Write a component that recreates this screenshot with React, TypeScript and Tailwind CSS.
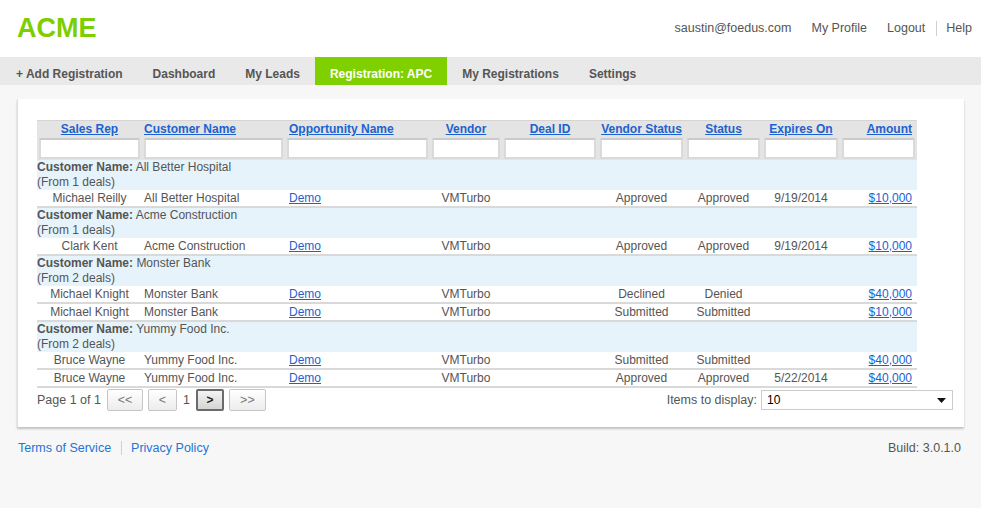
type Deal = {
  rep: string;
  customer: string;
  vendorStatus: string;
  status: string;
  expires: string;
  amount: string;
};

type Group = {
  customer: string;
  deals: Deal[];
};

const groups: Group[] = [
  {
    customer: "All Better Hospital",
    deals: [
      { rep: "Michael Reilly", customer: "All Better Hospital", vendorStatus: "Approved", status: "Approved", expires: "9/19/2014", amount: "$10,000" },
    ],
  },
  {
    customer: "Acme Construction",
    deals: [
      { rep: "Clark Kent", customer: "Acme Construction", vendorStatus: "Approved", status: "Approved", expires: "9/19/2014", amount: "$10,000" },
    ],
  },
  {
    customer: "Monster Bank",
    deals: [
      { rep: "Michael Knight", customer: "Monster Bank", vendorStatus: "Declined", status: "Denied", expires: "", amount: "$40,000" },
      { rep: "Michael Knight", customer: "Monster Bank", vendorStatus: "Submitted", status: "Submitted", expires: "", amount: "$10,000" },
    ],
  },
  {
    customer: "Yummy Food Inc.",
    deals: [
      { rep: "Bruce Wayne", customer: "Yummy Food Inc.", vendorStatus: "Submitted", status: "Submitted", expires: "", amount: "$40,000" },
      { rep: "Bruce Wayne", customer: "Yummy Food Inc.", vendorStatus: "Approved", status: "Approved", expires: "5/22/2014", amount: "$40,000" },
    ],
  },
];

const navItems = ["+ Add Registration", "Dashboard", "My Leads", "Registration: APC", "My Registrations", "Settings"];

const columns = [
  { label: "Sales Rep", width: "w-[105px]", align: "text-center" },
  { label: "Customer Name", width: "w-[143px]", align: "text-left pl-[2px]" },
  { label: "Opportunity Name", width: "w-[145px]", align: "text-left pl-[4px]" },
  { label: "Vendor", width: "w-[72px]", align: "text-center" },
  { label: "Deal ID", width: "w-[96px]", align: "text-center" },
  { label: "Vendor Status", width: "w-[87px]", align: "text-center" },
  { label: "Status", width: "w-[77px]", align: "text-center" },
  { label: "Expires On", width: "w-[78px]", align: "text-center" },
  { label: "Amount", width: "w-[77px]", align: "text-right pr-[5px]" },
];

function PageButton({ label, width, active }: { label: string; width: string; active?: boolean }) {
  return (
    <button
      className={
        active
          ? `h-[22px] ${width} rounded-[2px] border-2 border-[#6b6b6b] bg-gradient-to-b from-[#f4f4f4] to-[#d4d4d4] text-[12px] font-bold text-[#222]`
          : `h-[22px] ${width} rounded-[2px] border border-[#c6c6c6] bg-gradient-to-b from-white to-[#ececec] text-[12.5px] text-[#777]`
      }
    >
      {label}
    </button>
  );
}

export default function App() {
  return (
    <div className="min-h-[508px] bg-[#f7f7f7] font-['Liberation_Sans',Arial,sans-serif] text-[#555]">
      <header className="flex h-[57px] items-center justify-between bg-white pl-[17px] pr-[9px]">
        <div className="text-[27px] font-bold leading-none text-[#7dce00]">ACME</div>
        <div className="flex items-center text-[12.5px] text-[#555]">
          <span>saustin@foedus.com</span>
          <span className="ml-[20px]">My Profile</span>
          <span className="ml-[20px]">Logout</span>
          <span className="ml-[11px] mr-[9px] h-[15px] w-px bg-[#cfcfcf]" />
          <span>Help</span>
        </div>
      </header>

      <nav className="flex h-[28px] bg-[#e9e9e9] pl-px">
        {navItems.map((item) => (
          <div
            key={item}
            className={
              item === "Registration: APC"
                ? "flex items-center bg-[#80d000] px-[15px] pt-[6px] text-[12px] font-bold text-white"
                : "flex items-center px-[15px] pt-[6px] text-[12px] font-bold text-[#555]"
            }
          >
            {item}
          </div>
        ))}
      </nav>

      <main className="px-[17px] pt-[14px]">
        <div className="border-l border-[#e0e0e0] bg-white pb-[16px] pl-[19px] pr-[11px] pt-[21px] shadow-[0_2px_2px_rgba(0,0,0,0.22)]">
          <table className="w-[880px] table-fixed border-collapse text-[12px]">
            <colgroup>
              {columns.map((c) => (
                <col key={c.label} className={c.width} />
              ))}
            </colgroup>
            <thead className="bg-[#e4e4e4]">
              <tr className="border-t border-[#d4d4d4]">
                {columns.map((c) => (
                  <th key={c.label} className={`h-[16px] font-bold leading-[16px] ${c.align}`}>
                    <a className="text-[#1b62d0] underline">{c.label}</a>
                  </th>
                ))}
              </tr>
              <tr>
                {columns.map((c) => (
                  <td key={c.label} className="px-[2px] pb-px pt-px">
                    <div className="h-[21px] w-full border-2 border-[#dadada] border-t-[#cacaca] bg-white" />
                  </td>
                ))}
              </tr>
            </thead>
            <tbody>
              {groups.map((g) => (
                <>
                  <tr key={g.customer} className="bg-[#e6f3fb]">
                    <td colSpan={9} className="h-[30px] align-top leading-[15px]">
                      <div>
                        <span className="font-bold">Customer Name:</span> {g.customer}
                      </div>
                      <div>(From {g.deals.length} deals)</div>
                    </td>
                  </tr>
                  {g.deals.map((d, i) => (
                    <tr key={g.customer + i} className="border-b-2 border-[#d9d9d9]">
                      <td className="h-[16px] text-center leading-[16px]">{d.rep}</td>
                      <td className="pl-[2px] leading-[16px]">{d.customer}</td>
                      <td className="pl-[4px] leading-[16px]">
                        <a className="text-[#1b62d0] underline">Demo</a>
                      </td>
                      <td className="text-center leading-[16px]">VMTurbo</td>
                      <td />
                      <td className="text-center leading-[16px]">{d.vendorStatus}</td>
                      <td className="text-center leading-[16px]">{d.status}</td>
                      <td className="text-center leading-[16px]">{d.expires}</td>
                      <td className="pr-[5px] text-right leading-[16px]">
                        <a className="text-[#1b62d0] underline">{d.amount}</a>
                      </td>
                    </tr>
                  ))}
                </>
              ))}
            </tbody>
          </table>

          <div className="mt-px flex items-center justify-between">
            <div className="flex items-center gap-[5px] text-[12.5px]">
              <span className="mr-px">Page 1 of 1</span>
              <PageButton label="<<" width="w-[36px]" />
              <PageButton label="<" width="w-[29px]" />
              <span className="px-px">1</span>
              <PageButton label=">" width="w-[28px]" active />
              <PageButton label=">>" width="w-[37px]" />
            </div>
            <div className="flex items-center gap-[4px] text-[12.5px]">
              <span>Items to display:</span>
              <div className="flex h-[20px] w-[192px] items-center justify-between border border-[#cccccc] bg-white pl-[5px] pr-[6px] text-[12px] text-black">
                <span>10</span>
                <svg width="9" height="5" viewBox="0 0 9 5">
                  <path d="M0 0h9L4.5 5z" fill="#111" />
                </svg>
              </div>
            </div>
          </div>
        </div>
      </main>

      <footer className="flex items-center justify-between pl-[18px] pr-[20px] pt-[12px] text-[12.5px]">
        <div className="flex items-center">
          <a className="text-[#2275d6]">Terms of Service</a>
          <span className="ml-[10px] mr-[9px] h-[14px] w-px bg-[#d0d0d0]" />
          <a className="text-[#2275d6]">Privacy Policy</a>
        </div>
        <span>Build: 3.0.1.0</span>
      </footer>
    </div>
  );
}
